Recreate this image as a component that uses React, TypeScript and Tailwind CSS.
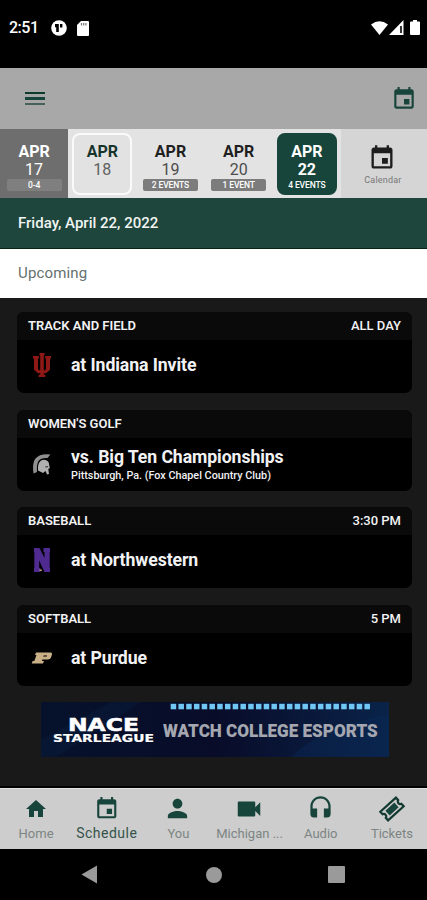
import React from "react";

const EVENT =
  "M17 12h-5v5h5v-5zM16 1v2H8V1H6v2H5c-1.11 0-1.99.9-1.99 2L3 19c0 1.1.89 2 2 2h14c1.1 0 2-.9 2-2V5c0-1.1-.9-2-2-2h-1V1h-2zm3 18H5V8h14v11z";
const HOME = "M10 20v-6h4v6h5v-8h3L12 3 2 12h3v8z";
const PERSON =
  "M12 12c2.21 0 4-1.79 4-4s-1.79-4-4-4-4 1.79-4 4 1.79 4 4 4zm0 2c-2.67 0-8 1.34-8 4v2h16v-2c0-2.66-5.33-4-8-4z";
const VIDEO =
  "M17 10.5V7c0-.55-.45-1-1-1H4c-.55 0-1 .45-1 1v10c0 .55.45 1 1 1h12c.55 0 1-.45 1-1v-3.5l4 4v-11l-4 4z";
const HEADSET =
  "M12 1c-4.97 0-9 4.03-9 9v7c0 1.66 1.34 3 3 3h3v-8H5v-2c0-3.87 3.13-7 7-7s7 3.13 7 7v2h-4v8h3c1.66 0 3-1.34 3-3v-7c0-4.97-4.03-9-9-9z";

function Icon({ d, className }: { d: string; className: string }) {
  return (
    <svg viewBox="0 0 24 24" fill="currentColor" className={className}>
      <path d={d} />
    </svg>
  );
}

function Ticket() {
  return (
    <svg viewBox="0 0 26 26" className="ml-[2px] size-[26px] text-[#12392f]">
      <g transform="rotate(-42 13 13)" fill="none" stroke="currentColor">
        <path
          d="M2.5 7.2h21v3.4a2.5 2.5 0 0 0 0 4.8v3.4h-21v-3.4a2.5 2.5 0 0 0 0-4.8z"
          strokeWidth="2.2"
        />
        <rect x="7" y="9.8" width="12" height="6.4" fill="#18453b" stroke="none" />
      </g>
    </svg>
  );
}

function StatusBar() {
  return (
    <div className="flex h-[68px] shrink-0 items-start justify-between bg-black pt-[19px] pr-[7px] pl-[9px] text-white">
      <div className="flex items-center">
        <span className="w-[42px] text-[16px] leading-[18px] font-medium tracking-[-0.5px]">2:51</span>
        <svg viewBox="0 0 16 16" className="size-4">
          <circle cx="8" cy="8" r="7.8" fill="white" />
          <path d="M4 4h3.800v8H5.200V7.200H4zM9 4h2.400v3.400H9z" fill="black" />
        </svg>
        <svg viewBox="0 0 12 15" className="ml-[10px] h-[15px] w-3">
          <path d="M4 0h7q1 0 1 1v13q0 1-1 1H1q-1 0-1-1V4z" fill="white" />
          <path d="M4.500 2v2.500M6.700 2v2.500M8.900 2v2.500" stroke="#777" strokeWidth="1.2" />
        </svg>
      </div>
      <div className="flex items-center pt-[1px]">
        <svg viewBox="0 0 17 14" className="h-[14px] w-[17px]">
          <path d="M0 3.500Q8.500-3 17 3.500L8.500 14z" fill="white" />
        </svg>
        <svg viewBox="0 0 15 15" className="ml-px h-[15px] w-[15px]">
          <path d="M14.500 0v15H0z" fill="white" />
          <path d="M11.200 6h1.600v7h-1.600z" fill="black" />
        </svg>
        <svg viewBox="0 0 10 15" className="ml-[6px] h-[15px] w-[10px]">
          <path d="M3 0h4v1.500h2q1 0 1 1V14q0 1-1 1H1q-1 0-1-1V2.500q0-1 1-1h2z" fill="white" />
        </svg>
      </div>
    </div>
  );
}

function Header() {
  return (
    <div className="flex h-[61px] shrink-0 items-center justify-between bg-[#a8a8a8] pr-[10px] pl-[25px]">
      <div className="flex flex-col gap-[3px]">
        <div className="h-[2.500px] w-5 bg-[#103a2e]" />
        <div className="h-[2.500px] w-5 bg-[#18453b]" />
        <div className="h-[2.500px] w-5 bg-[#47605a]" />
      </div>
      <Icon d={EVENT} className="size-[26px] text-[#18453b]" />
    </div>
  );
}

type Day = { num: string; note?: string; kind: "past" | "today" | "plain" | "active" };

const days: Day[] = [
  { num: "17", note: "0-4", kind: "past" },
  { num: "18", kind: "today" },
  { num: "19", note: "2 EVENTS", kind: "plain" },
  { num: "20", note: "1 EVENT", kind: "plain" },
  { num: "22", note: "4 EVENTS", kind: "active" },
];

const outer = {
  past: "bg-[#6e6e6e] text-white",
  today: "bg-[#e3e3e3] text-[#17352c]",
  plain: "bg-[#e3e3e3] text-[#1f1f1f]",
  active: "bg-[#e3e3e3] text-white",
};
const inner = {
  past: "border-transparent",
  today: "border-[#fafafa] bg-[#e2e2e2]",
  plain: "border-transparent",
  active: "border-[#18453b] bg-[#18453b]",
};
const numStyle = {
  past: "text-white font-normal",
  today: "text-[#606060] font-normal",
  plain: "text-[#4c4c4c] font-normal",
  active: "text-white font-bold",
};
const noteStyle = {
  past: "bg-[#7f7f7f]",
  today: "",
  plain: "bg-[#7c7c7c]",
  active: "bg-[#18453b]",
};

function DateStrip() {
  return (
    <div className="flex h-[69px] shrink-0 bg-[#d5d5d5]">
      {days.map((d) => (
        <div key={d.num} className={`flex w-[68.200px] justify-center pt-[4px] ${outer[d.kind]}`}>
          <div
            className={`flex h-[62px] w-[60px] flex-col items-center rounded-[8px] border-2 pt-[8px] ${inner[d.kind]}`}
          >
            <span className="text-[16px] leading-[18px] font-bold">APR</span>
            <span className={`text-[16px] leading-[18px] ${numStyle[d.kind]}`}>{d.num}</span>
            {d.note && (
              <span
                className={`h-[12px] w-[55px] rounded-[2px] text-center text-[8.500px] leading-[12px] font-medium tracking-[-0.1px] text-white ${noteStyle[d.kind]}`}
              >
                {d.note}
              </span>
            )}
          </div>
        </div>
      ))}
      <div className="flex flex-1 flex-col items-center pt-[15px] pr-[3px]">
        <Icon d={EVENT} className="size-[28px] text-[#1d1d1d]" />
        <span className="mt-[3px] pl-px text-[9px] leading-[11px] tracking-[0.2px] text-[#777]">Calendar</span>
      </div>
    </div>
  );
}

function Indiana() {
  return (
    <svg viewBox="0 0 18 24" className="h-6 w-[18px]" fill="#8e1815">
      <path d="M6.500 0h5v2.500h-.7v14.800h1.200l1-1.300V5.500h-.8V3H18v2.500h-1v11.200L13 20.300h-2.200v1.500h1.600V24H5.600v-2.200h1.600v-1.500H5L1 16.700V5.500H0V3h5.800v2.500H5V16l1 1.300h1.200V2.500H6.500z" />
    </svg>
  );
}

function Spartan() {
  return (
    <svg viewBox="0 0 18 21" className="h-[21px] w-[18px]">
      <path
        d="M.5 19.500Q-1 9 2.500 4.500 7-.7 17.500.5L14.500 4Q8 3.500 5.500 7 3.500 10 4 18z"
        fill="#8f8f8f"
      />
      <path
        d="M5 13Q5.500 6 11 5.800q5 .2 5.200 5.200l.6 3-1.500 1 .7 5-2 .5-1.500-3.500-2.500 2-5-2.500z"
        fill="#b0b0b0"
      />
      <path d="M12 12.500l3.200-.5-.5 1.200-2 .3z" fill="#333" />
    </svg>
  );
}

function Northwestern() {
  return (
    <svg viewBox="0 0 16 24" className="ml-px h-6 w-4" fill="#4e2a91">
      <path d="M0 0h5.500l5 10V4h-1V0H16v4h-.3v16h.3v4h-5.500L5.200 12.500V20h1.200v4H0v-4h.3V4H0z" />
      <path d="M5.500 21.500h2.300V23H5.500z" fill="#c29a64" />
    </svg>
  );
}

function Purdue() {
  return (
    <svg viewBox="0 0 22 12" className="h-3 w-[22px]">
      <path
        d="M5 .5h14.500q2 0 1.500 2l-1 3q-.7 2-3 2h-5.500l-.7 1.500H13l-1 2.500H.7l1-2.500h1.600L5.500 3H4z"
        fill="#c9b087"
      />
      <path d="M12.700 3.200h3.400l-.5 1.500h-3.400z" fill="#3a3020" />
    </svg>
  );
}

type Game = { sport: string; time?: string; title: string; place?: string; logo: React.ReactNode };

const games: Game[] = [
  { sport: "TRACK AND FIELD", time: "ALL DAY", title: "at Indiana Invite", logo: <Indiana /> },
  {
    sport: "WOMEN'S GOLF",
    title: "vs. Big Ten Championships",
    place: "Pittsburgh, Pa. (Fox Chapel Country Club)",
    logo: <Spartan />,
  },
  { sport: "BASEBALL", time: "3:30 PM", title: "at Northwestern", logo: <Northwestern /> },
  { sport: "SOFTBALL", time: "5 PM", title: "at Purdue", logo: <Purdue /> },
];

function GameCard({ game }: { game: Game }) {
  return (
    <div className="flex h-[81px] flex-col overflow-hidden rounded-[7px] bg-black text-[#f2f2f4]">
      <div className="flex h-[28px] shrink-0 items-center justify-between bg-[#0a0a0b] px-[11px] text-[13px] leading-4 font-semibold">
        <span>{game.sport}</span>
        <span className="font-medium">{game.time}</span>
      </div>
      <div className="flex h-[50px] items-center">
        <div className={`flex w-[49px] shrink-0 justify-center ${game.place ? "pt-1" : ""}`}>
          {game.logo}
        </div>
        <div className={`flex flex-col pl-[5px] ${game.place ? "pt-[6px]" : ""}`}>
          <span className="text-[17.700px] leading-5 font-bold tracking-[-0.1px]">{game.title}</span>
          {game.place && (
            <span className="pt-px text-[10.800px] leading-[16px] font-medium">{game.place}</span>
          )}
        </div>
      </div>
    </div>
  );
}

function Banner() {
  return (
    <div className="mx-auto mt-4 flex h-[55px] w-[348px] bg-linear-to-r from-[#06122c] via-[#080c29] to-[#092349]">
      <svg viewBox="0 0 348 55" className="h-[55px] w-[348px]">
        <path d="M250 55q30-30 98-43v43z" fill="#0a2b57" opacity=".4" />
        <path d="M0 38L70 0h30L15 55H0z" fill="#0b2142" opacity=".35" />
        <g fill="#71c7f3">
          {Array.from({ length: 26 }, (_, i) => (
            <rect key={i} x={129.700 + i * 7.750} y="1.800" width="5.500" height="5.500" />
          ))}
        </g>
        <g fontFamily="'DejaVu Sans', sans-serif" fontWeight="700" fill="white" stroke="white">
          <text
            x="27"
            y="28.800"
            fontSize="17.500"
            strokeWidth=".5"
            textLength="71"
            lengthAdjust="spacingAndGlyphs"
          >
            NACE
          </text>
          <text
            x="12"
            y="39.800"
            fontSize="10.800"
            strokeWidth=".2"
            textLength="101"
            lengthAdjust="spacingAndGlyphs"
          >
            STARLEAGUE
          </text>
        </g>
        <g transform="translate(122 34.500) scale(.88 1)">
          <text
            fontSize="19"
            textLength="244"
            lengthAdjust="spacingAndGlyphs"
            fontFamily="Roboto, sans-serif"
            fontWeight="900"
            fill="#a4a7b0"
          >
            WATCH COLLEGE ESPORTS
          </text>
        </g>
      </svg>
    </div>
  );
}

const tabs = [
  { label: "Home", icon: <Icon d={HOME} className="size-6" /> },
  { label: "Schedule", icon: <Icon d={EVENT} className="size-[25.500px]" />, active: true },
  { label: "You", icon: <Icon d={PERSON} className="size-[29px]" /> },
  { label: "Michigan ...", icon: <Icon d={VIDEO} className="size-[30px]" /> },
  { label: "Audio", icon: <Icon d={HEADSET} className="size-[27px]" /> },
  { label: "Tickets", icon: <Ticket /> },
];

function TabBar() {
  return (
    <div className="grid h-[61px] shrink-0 grid-cols-6 border-t border-[#e4e4e4] bg-[#cdcdcd] text-[#18453b]">
      {tabs.map((t) => (
        <div key={t.label} className="flex flex-col items-center pt-[4px]">
          <div className="flex h-[31px] items-center justify-center">{t.icon}</div>
          <span
            className={
              t.active
                ? "text-[14px] leading-[18px] tracking-[0.5px] whitespace-nowrap text-[#35534b]"
                : "pt-px pl-px text-[13px] leading-[18px] whitespace-nowrap text-[#7c8583]"
            }
          >
            {t.label}
          </span>
        </div>
      ))}
    </div>
  );
}

export default function App() {
  return (
    <div className="flex h-[900px] w-[427px] flex-col overflow-hidden bg-black font-[Roboto,'Liberation_Sans',sans-serif]">
      <StatusBar />
      <Header />
      <DateStrip />
      <div className="flex h-[51px] shrink-0 items-center border-b border-[#082415] bg-[#1e463c] pl-[18px] text-[15px] font-medium text-[#f0f4f2]">
        Friday, April 22, 2022
      </div>
      <div className="flex h-[49px] shrink-0 items-center bg-white pl-[18px] text-[15px] tracking-[0.15px] text-[#64716e]">
        Upcoming
      </div>
      <div className="flex flex-1 flex-col border-b-2 border-black bg-[#191919] pt-[14px] pr-[15px] pl-[17px]">
        <div className="flex flex-col gap-[16.600px]">
          {games.map((g) => (
            <GameCard key={g.sport} game={g} />
          ))}
        </div>
        <Banner />
      </div>
      <TabBar />
      <div className="flex h-[51px] shrink-0 items-center bg-black pl-[81px]">
        <svg viewBox="0 0 17 19" className="h-[19px] w-[17px]">
          <path d="M16 .5v18L.5 9.500z" fill="#9a9a9a" />
        </svg>
        <div className="ml-[108px] size-4 rounded-full bg-[#9a9a9a]" />
        <div className="ml-[106px] size-[17px] rounded-[1px] bg-[#9a9a9a]" />
      </div>
    </div>
  );
}
